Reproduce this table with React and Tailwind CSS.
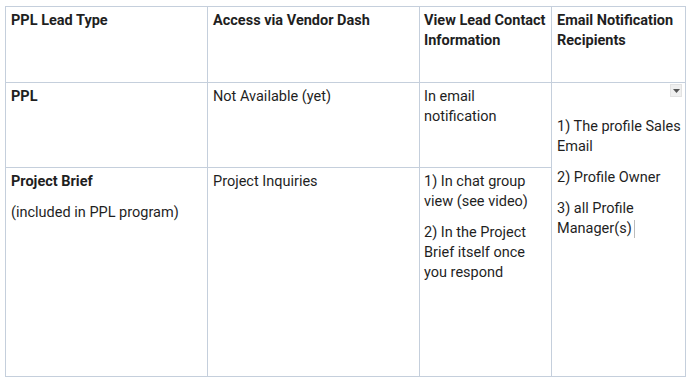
export default function App() {
  const cell = "border border-[#c5cfdc] align-top pl-[5px] pr-[2px] pt-[4px] pb-[4px]";
  return (
    <div className="w-[688px] h-[382px] bg-white pl-[5px] pt-[6px] text-[14.5px] leading-[20px] text-[#1f1f1f] font-['Roboto',sans-serif]">
      <table className="table-fixed border-collapse w-[680px]">
        <colgroup>
          <col className="w-[202px]" />
          <col className="w-[212px]" />
          <col className="w-[132px]" />
          <col className="w-[134px]" />
        </colgroup>
        <tbody>
          <tr className="h-[76px]">
            <td className={cell + " font-bold"}>PPL Lead Type</td>
            <td className={cell + " font-bold"}>Access via Vendor Dash</td>
            <td className={cell + " font-bold !pl-[4px] !pr-0"}>View Lead Contact Information</td>
            <td className={cell + " font-bold"}>Email Notification Recipients</td>
          </tr>
          <tr className="h-[85px]">
            <td className={cell + " font-bold"}>PPL</td>
            <td className={cell}>Not Available (yet)</td>
            <td className={cell + " !pl-[4px] !pr-0"}>In email notification</td>
            <td className={cell + " !pt-[1px] !pr-[1px]"} rowSpan={2}>
              <div className="flex justify-end pr-[2px]">
                <div className="w-[12px] h-[13px] bg-[#efefef] border border-[#e2e2e2] flex items-center justify-center">
                  <svg width="7" height="4" viewBox="0 0 7 4">
                    <path d="M0 0H7L3.5 4Z" fill="#555" />
                  </svg>
                </div>
              </div>
              <div className="mt-[20px] flex flex-col gap-[11px]">
                <p>1) The profile Sales Email</p>
                <p>2) Profile Owner</p>
                <p>
                  3) all Profile Manager(s)
                  <span className="inline-block w-px h-[18px] bg-[#bbb] align-middle ml-[2px]" />
                </p>
              </div>
            </td>
          </tr>
          <tr className="h-[209px]">
            <td className={cell}>
              <div className="flex flex-col gap-[11px]">
                <p className="font-bold">Project Brief</p>
                <p>(included in PPL program)</p>
              </div>
            </td>
            <td className={cell}>Project Inquiries</td>
            <td className={cell + " !pl-[4px] !pr-0"}>
              <div className="flex flex-col gap-[11px]">
                <p>1) In chat group view (see video)</p>
                <p>2) In the Project Brief itself once you respond</p>
              </div>
            </td>
          </tr>
        </tbody>
      </table>
    </div>
  );
}
